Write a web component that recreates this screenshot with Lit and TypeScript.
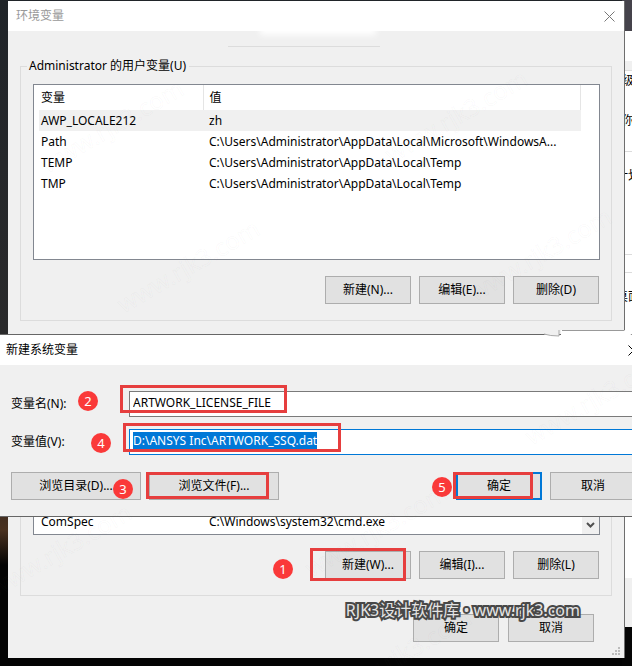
import { LitElement, html, css, svg } from "lit";
import { customElement, property } from "lit/decorators.js";

const closeIcon = svg`<svg width="11" height="11" viewBox="0 0 11 11" aria-hidden="true">
  <path d="M.5 .5 L10.5 10.5 M10.5 .5 L.5 10.5" fill="none" stroke="currentColor" stroke-width="1" />
</svg>`;

/** A numbered step badge with a red frame, laid over the control in its slot. */
@customElement("step-mark")
export class StepMark extends LitElement {
  @property({ type: Number }) step = 0;

  static styles = css`
    :host {
      display: block;
      position: relative;
    }
    .frame {
      position: absolute;
      box-sizing: border-box;
      border: 3px solid #e63e3e;
      left: var(--frame-left);
      top: var(--frame-top);
      width: var(--frame-width);
      height: var(--frame-height);
      pointer-events: none;
    }
    .badge {
      position: absolute;
      left: var(--badge-left);
      top: var(--badge-top);
      width: 20px;
      height: 20px;
      border-radius: 50%;
      background: #fa3939;
      color: #fff;
      font-size: 13px;
      line-height: 20px;
      text-align: center;
      pointer-events: none;
    }
  `;

  render() {
    return html`<slot></slot>
      <span class="frame"></span>
      <span class="badge">${this.step}</span>`;
  }
}

@customElement("app-root")
export class AppRoot extends LitElement {
  private userVars = [
    ["AWP_LOCALE212", "zh"],
    ["Path", "C:\\Users\\Administrator\\AppData\\Local\\Microsoft\\WindowsA..."],
    ["TEMP", "C:\\Users\\Administrator\\AppData\\Local\\Temp"],
    ["TMP", "C:\\Users\\Administrator\\AppData\\Local\\Temp"],
  ];

  private tiles = [
    [112, 126],
    [456, 116],
    [188, 266],
    [540, 254],
    [596, 398],
    [60, 550],
    [376, 530],
    [400, 655],
  ];

  static styles = css`
    :host {
      display: block;
      position: relative;
      overflow: hidden;
      min-height: 100vh;
      box-sizing: border-box;
      padding: 1px 7px 8px 8px;
      background: linear-gradient(#202429, #2a2a2b 330px, #2e2520 480px, #4a3120 530px, #030303 565px);
      color: #000;
      font-family: "Noto Sans", "Noto Sans CJK SC", sans-serif;
      font-size: 12px;
      line-height: 18px;
    }
    * {
      box-sizing: border-box;
    }
    button,
    input {
      font: inherit;
      color: inherit;
    }
    button {
      height: 28px;
      min-width: 86px;
      padding: 0;
      border: 1px solid #adadad;
      border-radius: 0;
      background: #e1e1e1;
    }
    .wide {
      width: 130px;
    }
    .default {
      border: 2px solid #0078d7;
    }

    /* window behind the dialog */
    .behind {
      position: absolute;
      top: 0;
      right: 0;
      bottom: 0;
      width: 10px;
      background: linear-gradient(#45434b 31px, #fff 31px 61px, #f0f0f0 61px 70px, #dcdcdc 70px 71px, #fff 71px 151px, #dcdcdc 151px 152px, #fff 152px 254px, #dcdcdc 254px 255px, #fff 255px 272px, #dcdcdc 272px 273px, #fff 273px 578px, #f0f0f0 578px 627px, #050505 627px);
      display: flex;
      flex-direction: column;
      padding-top: 72px;
      white-space: nowrap;
    }
    .behind span {
      height: 18px;
    }
    .g22 {
      margin-top: 22px;
    }
    .g37 {
      margin-top: 37px;
      text-indent: -6px;
    }
    .g103 {
      margin-top: 103px;
      text-indent: -6px;
    }

    .window {
      position: relative;
      background: #f0f0f0;
      border-right: 1px solid #6e6e6e;
    }
    .titlebar {
      display: flex;
      align-items: center;
      justify-content: space-between;
      height: 30px;
      padding: 0 9px 0 8px;
      background: #fff;
      color: #999;
    }
    .close {
      display: flex;
      align-items: center;
      justify-content: center;
      width: 12px;
      min-width: 0;
      height: 20px;
      border: 0;
      background: none;
      color: #777;
    }
    .blank {
      position: absolute;
      left: 220px;
      top: 30px;
      width: 152px;
      height: 16px;
      border-bottom: 1px solid #dcdcdc;
    }
    .blank::before {
      content: "";
      position: absolute;
      left: 32px;
      top: -8px;
      width: 116px;
      height: 12px;
      background: #fff;
      filter: blur(3px);
    }
    .body {
      display: flex;
      flex-direction: column;
      padding: 26px 12px 16px;
    }
    fieldset {
      margin: 0 0 11px;
      min-width: 0;
      padding: 9px 11px 16px 12px;
      border: 1px solid #dcdcdc;
    }
    fieldset + fieldset {
      margin-bottom: 18px;
    }
    legend {
      margin-left: -6px;
      padding: 0 3px 0 2px;
      height: 18px;
    }
    .list {
      display: flex;
      height: 176px;
      border: 1px solid #828790;
      background: #fff;
    }
    .list table {
      flex: 1;
      align-self: flex-start;
      min-width: 0;
      margin: 0 18px 0 5px;
      border-collapse: collapse;
      table-layout: fixed;
    }
    .list.scrolled table {
      align-self: flex-end;
      margin: 0 0 2px 5px;
    }
    th,
    td {
      height: 21px;
      padding: 0 6px 0 2px;
      text-align: left;
      font-weight: 400;
      white-space: nowrap;
      overflow: hidden;
    }
    .name {
      width: 164px;
    }
    .value {
      padding-left: 6px;
    }
    th {
      height: 25px;
      border-right: 1px solid #e5e5e5;
    }
    .picked td {
      background: #f0f0f0;
    }
    .scroll {
      display: flex;
      align-items: flex-end;
      justify-content: center;
      width: 17px;
      min-width: 0;
      height: auto;
      padding-bottom: 4px;
      border: 0;
      background: #f0f0f0;
    }
    .actions {
      display: flex;
      justify-content: flex-end;
      gap: 8px;
      margin-top: 16px;
      padding-right: 1px;
    }
    .confirm {
      display: flex;
      justify-content: flex-end;
      gap: 9px;
      padding-right: 18px;
    }
    .grip {
      position: absolute;
      right: 3px;
      bottom: 2px;
    }

    /* dialog in front, running past the right edge */
    .dialog {
      position: absolute;
      left: 0;
      right: -16px;
      top: 334px;
      background: #f0f0f0;
      border: solid #666;
      border-width: 1px 0;
    }
    .dialog .titlebar {
      color: #000;
      padding: 0 9px 0 6px;
    }
    .dialog .close {
      color: #000;
    }
    .form {
      display: grid;
      grid-template-columns: 118px 1fr;
      row-gap: 12px;
      align-items: center;
      padding: 26px 12px 16px 11px;
    }
    .field {
      display: flex;
      height: 26px;
      padding: 2px 3px 5px;
      border: 1px solid #7a7a7a;
      background: #fff;
    }
    .field.active {
      border-color: #0078d7;
    }
    input {
      flex: 1;
      min-width: 0;
      height: 18px;
      padding: 0;
      border: 0;
      border-radius: 0;
      outline: 0;
      background: none;
    }
    .active input {
      flex: none;
      field-sizing: content;
      max-width: 100%;
      background: #0078d7;
      color: #fff;
    }
    .row {
      grid-column: 1 / -1;
      display: flex;
      gap: 8px;
      margin-top: 5px;
    }
    .push {
      margin-left: auto;
    }
    .edge {
      position: absolute;
      right: 16px;
      top: -6px;
    }

    .m-new {
      --frame-left: -15px;
      --frame-top: -3px;
      --frame-width: 96px;
      --frame-height: 33px;
      --badge-left: -52px;
      --badge-top: 8px;
    }
    .m-name {
      --frame-left: -9px;
      --frame-top: -6px;
      --frame-width: 167px;
      --frame-height: 28px;
      --badge-left: -51px;
      --badge-top: 0px;
    }
    .m-value {
      --frame-left: -6px;
      --frame-top: -6px;
      --frame-width: 218px;
      --frame-height: 29px;
      --badge-left: -38px;
      --badge-top: 4px;
    }
    .m-browse {
      --frame-left: -3px;
      --frame-top: 0px;
      --frame-width: 123px;
      --frame-height: 27px;
      --badge-left: -36px;
      --badge-top: 7px;
    }
    .m-ok {
      --frame-left: -3px;
      --frame-top: 0px;
      --frame-width: 80px;
      --frame-height: 27px;
      --badge-left: -24px;
      --badge-top: 5px;
    }

    .tile {
      position: absolute;
      width: 180px;
      height: 30px;
      margin: -15px 0 0 -90px;
      font-size: 24px;
      line-height: 30px;
      text-align: center;
      transform: rotate(-30deg);
      color: transparent;
      -webkit-text-stroke: 1px rgba(128, 128, 128, 0.04);
      pointer-events: none;
    }
    .credit {
      position: absolute;
      right: 52px;
      top: 598px;
      font-size: 16px;
      line-height: 24px;
      white-space: nowrap;
      color: #e4e4e4;
      -webkit-text-stroke: 4px #484848;
      paint-order: stroke fill;
      pointer-events: none;
    }
  `;

  render() {
    return html`
      <div class="behind">
        <span>级</span><span class="g22">你</span><span class="g37">计划</span><span class="g103">桌面</span>
      </div>

      <section class="window" aria-label="环境变量">
        <header class="titlebar">
          <span>环境变量</span>
          <button class="close" aria-label="关闭">${closeIcon}</button>
        </header>
        <div class="blank"></div>
        <div class="body">
          <fieldset>
            <legend>Administrator 的用户变量(U)</legend>
            <div class="list">
              <table>
                <thead>
                  <tr><th class="name">变量</th><th class="value">值</th></tr>
                </thead>
                <tbody>
                  ${this.userVars.map(
                    ([name, value], i) => html`<tr class=${i === 0 ? "picked" : ""}>
                      <td>${name}</td>
                      <td class="value">${value}</td>
                    </tr>`
                  )}
                </tbody>
              </table>
            </div>
            <div class="actions">
              <button>新建(N)...</button>
              <button>编辑(E)...</button>
              <button>删除(D)</button>
            </div>
          </fieldset>

          <fieldset>
            <legend>系统变量(S)</legend>
            <div class="list scrolled">
              <table>
                <tbody>
                  <tr><td class="name">ComSpec</td><td class="value">C:\\Windows\\system32\\cmd.exe</td></tr>
                </tbody>
              </table>
              <button class="scroll" aria-label="向下滚动">
                <svg width="9" height="9" viewBox="0 0 9 9" aria-hidden="true">
                  <path d="M1 2 L4.5 5.5 L8 2" fill="none" stroke="#505050" stroke-width="2" />
                </svg>
              </button>
            </div>
            <div class="actions">
              <step-mark class="m-new" step="1"><button>新建(W)...</button></step-mark>
              <button>编辑(I)...</button>
              <button>删除(L)</button>
            </div>
          </fieldset>

          <div class="confirm">
            <button>确定</button>
            <button>取消</button>
          </div>
        </div>
        <svg class="grip" width="9" height="9" viewBox="0 0 9 9" aria-hidden="true">
          <path d="M6 0h2v2h-2z M3 3h2v2h-2z M6 3h2v2h-2z M0 6h2v2h-2z M3 6h2v2h-2z M6 6h2v2h-2z" fill="#bcbcbc" />
        </svg>
      </section>

      <section class="dialog" role="dialog" aria-label="新建系统变量">
        <header class="titlebar">
          <span>新建系统变量</span>
          <button class="close" aria-label="关闭">${closeIcon}</button>
        </header>
        <svg class="edge" width="150" height="8" viewBox="0 0 150 8" aria-hidden="true">
          <path d="M79 1H142L150 6V8H79z" fill="#fff" />
          <path d="M62 5L77 1V7Q68 7 62 5z" fill="#f0f0f0" />
          <path d="M62 5Q68 7 77 7V1" fill="none" stroke="#aaa" />
          <path d="M80 1.5H142" stroke="#999" />
        </svg>
        <form class="form" @submit=${(e: Event) => e.preventDefault()}>
          <label for="var-name">变量名(N):</label>
          <step-mark class="m-name" step="2">
            <div class="field">
              <input id="var-name" type="text" value="ARTWORK_LICENSE_FILE" />
            </div>
          </step-mark>
          <label for="var-value">变量值(V):</label>
          <step-mark class="m-value" step="4">
            <div class="field active">
              <input id="var-value" type="text" spellcheck="false" value="D:\\ANSYS Inc\\ARTWORK_SSQ.dat" />
            </div>
          </step-mark>
          <div class="row">
            <button type="button" class="wide">浏览目录(D)...</button>
            <step-mark class="m-browse" step="3">
              <button type="button" class="wide">浏览文件(F)...</button>
            </step-mark>
            <step-mark class="m-ok push" step="5"><button class="default">确定</button></step-mark>
            <button type="button">取消</button>
          </div>
        </form>
      </section>

      ${this.tiles.map(
        ([x, y]) => html`<span class="tile" aria-hidden="true" style="left:${x}px;top:${y}px">www.rjk3.com</span>`
      )}
      <div class="credit">RJK3设计软件库 • www.rjk3.com</div>
    `;
  }
}
